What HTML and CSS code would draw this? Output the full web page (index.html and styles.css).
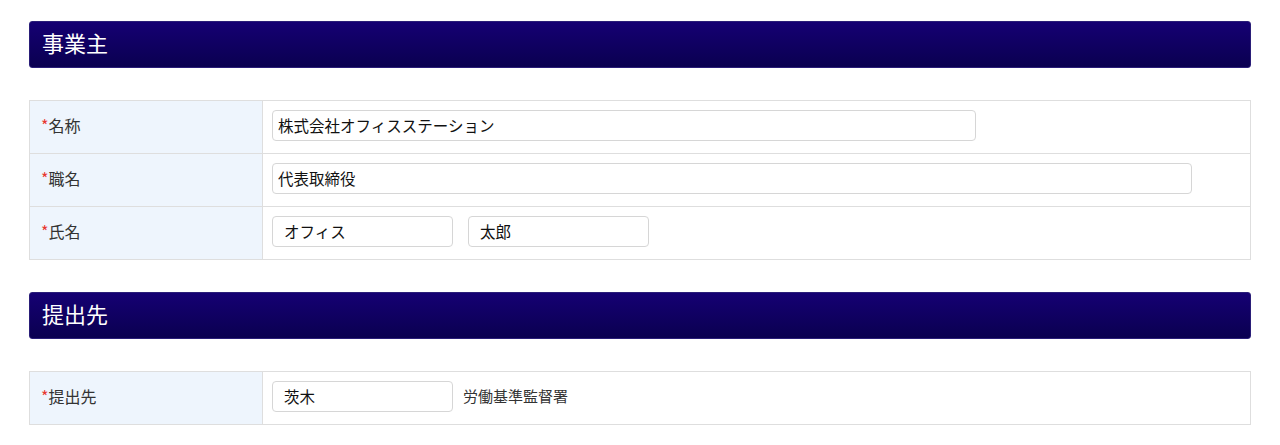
FILE: index.html
```html
<!DOCTYPE html>
<html lang="ja">
<head>
  <meta charset="UTF-8" />
  <title>事業主・提出先</title>
  <link rel="stylesheet" href="styles.css">
</head>
<body>
  <main class="page">
    <!-- ----------  事業主  ---------- -->
    <section class="block">
      <h2 class="block-title">事業主</h2>
      <table class="form-table">
        <tr>
          <th><span class="req">*</span>名称</th>
          <td><input class="field field-lg" type="text" value="株式会社オフィスステーション"></td>
        </tr>
        <tr>
          <th><span class="req">*</span>職名</th>
          <td><input class="field field-xl" type="text" value="代表取締役"></td>
        </tr>
        <tr>
          <th><span class="req">*</span>氏名</th>
          <td>
            <div class="inline">
              <input class="field field-sm pad" type="text" value="オフィス">
              <input class="field field-sm pad" type="text" value="太郎">
            </div>
          </td>
        </tr>
      </table>
    </section>

    <!-- ----------  提出先  ---------- -->
    <section class="block">
      <h2 class="block-title">提出先</h2>
      <table class="form-table">
        <tr>
          <th><span class="req">*</span>提出先</th>
          <td>
            <div class="inline">
              <input class="field field-sm pad" type="text" value="茨木">
              <span class="suffix">労働基準監督署</span>
            </div>
          </td>
        </tr>
      </table>
    </section>
  </main>
</body>
</html>
```

FILE: styles.css
```css
/* --- tokens --- */
:root {
  --navy-top: #150073;
  --navy-bottom: #0a0050;
  --line: #dedede;
  --label-bg: #eef5fd;
  --req: #e8362f;
}

* { box-sizing: border-box; margin: 0; padding: 0; }

body {
  font-family: "Noto Sans CJK JP", "Noto Sans", sans-serif;
  background: #fff;
  color: #333;
  font-size: 15px;
}

.page { padding: 21px 29px 0 29px; }

.block { margin-bottom: 32px; }

.block-title {
  height: 47px;
  display: flex;
  align-items: center;
  padding: 0 0 5px 12px;
  background: linear-gradient(to bottom, var(--navy-top), var(--navy-bottom));
  border: 1px solid #2a1e78;
  border-radius: 3px;
  color: #fff;
  font-size: 22px;
  font-weight: 400;
  margin-bottom: 32px;
}

/* --- form table --- */
.form-table {
  width: 100%;
  border-collapse: collapse;
  border: 1px solid var(--line);
}
.form-table tr { height: 53px; }
.form-table th {
  width: 233px;
  background: var(--label-bg);
  border: 1px solid var(--line);
  text-align: left;
  font-weight: 400;
  font-size: 16px;
  padding: 0 0 5px 11px;
  color: #333;
  vertical-align: middle;
}
.form-table td {
  border: 1px solid var(--line);
  padding: 9px 9px 0;
  vertical-align: top;
}
.req { color: var(--req); }

.inline { display: flex; align-items: center; gap: 15px; }
.inline .suffix { margin-left: -5px; }

.field {
  display: block;
  height: 31px;
  border: 1px solid #d6d6d6;
  border-radius: 4px;
  padding: 0 5px 2px;
  font-family: inherit;
  font-size: 15.5px;
  color: #111;
  background: #fff;
}
.field.pad { padding-left: 11px; }
.field-lg { width: 704px; }
.field-xl { width: 920px; }
.field-sm { width: 181px; }

.suffix { color: #333; padding-bottom: 3px; }
```
